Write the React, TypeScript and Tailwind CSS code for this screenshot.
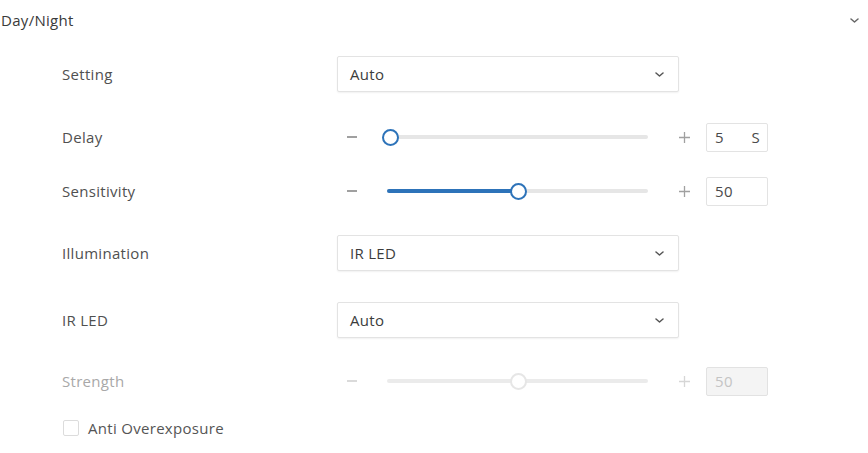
import React from 'react';

const Chevron = ({ className = '' }: { className?: string }) => (
  <svg width="9" height="5" viewBox="0 0 9 5" className={className}>
    <path d="M1 1l3.5 3 3.5-3" fill="none" stroke="currentColor" strokeWidth="1.5" strokeLinecap="round" strokeLinejoin="round" />
  </svg>
);

const Select = ({ value }: { value: string }) => (
  <div className="flex items-center justify-between w-[342px] h-[36px] pl-[12px] pr-[14px] border border-[#e3e3e3] rounded-[2px] shadow-[0_1px_2px_rgba(0,0,0,0.06)] bg-white text-[#3c3c3c]">
    <span>{value}</span>
    <Chevron className="text-[#555]" />
  </div>
);

type SliderProps = { pct: number; value: string; unit?: string; disabled?: boolean };

const Slider = ({ pct, value, unit, disabled }: SliderProps) => {
  return (
    <div className="flex items-center">
      <div className="w-[30px] flex justify-center">
        <div className={`w-[10px] h-[1.5px] ${disabled ? 'bg-[#dadada]' : 'bg-[#a0a0a0]'}`} />
      </div>
      <div className="relative ml-[20px] w-[261px] h-[16px] flex items-center">
        <div className={`w-full h-[4px] rounded-full ${disabled ? 'bg-[#ebebeb]' : 'bg-[#e6e6e6]'}`} />
        {!disabled && (
          <div className="absolute left-0 h-[4px] rounded-full bg-[#2d73b9]" style={{ width: `${pct}%` }} />
        )}
        <div
          className={`absolute w-[17px] h-[17px] -ml-[8px] rounded-full bg-white border-2 ${disabled ? 'border-[#e6e6e6]' : 'border-[#2d73b9]'}`}
          style={{ left: `${pct}%` }}
        />
      </div>
      <div className="w-[20px] ml-[26px] flex justify-center">
        <svg width="11" height="11" viewBox="0 0 11 11">
          <path d="M5.5 0v11M0 5.5h11" stroke={disabled ? '#d6d6d6' : '#a0a0a0'} strokeWidth="1.3" />
        </svg>
      </div>
      <div
        className={`ml-[12px] w-[62px] h-[29px] flex items-center justify-between pl-[8px] pr-[7px] border rounded-[2px] ${
          disabled ? 'bg-[#f4f4f4] border-[#e2e2e2] text-[#c4c4c4]' : 'bg-white border-[#e3e3e3] text-[#4a4a4a]'
        }`}
      >
        <span>{value}</span>
        {unit && <span>{unit}</span>}
      </div>
    </div>
  );
};

const Label = ({ children, muted }: { children: React.ReactNode; muted?: boolean }) => (
  <div className={`w-[337px] pl-[62px] ${muted ? 'text-[#a8a8a8]' : 'text-[#505050]'}`}>{children}</div>
);

export default function App() {
  return (
    <div className="w-[868px] h-[453px] bg-white text-[15px] tracking-[0.3px] font-['Open_Sans',sans-serif]">
      <div className="flex items-center justify-between h-[40px] pl-[1px] pr-[9px] text-[#3a3a3a]">
        <span>Day/Night</span>
        <Chevron className="text-[#666]" />
      </div>

      <div className="flex items-center h-[36px] mt-[16px]">
        <Label>Setting</Label>
        <Select value="Auto" />
      </div>

      <div className="flex items-center h-[30px] mt-[30px]">
        <Label>Delay</Label>
        <Slider pct={1} value="5" unit="S" />
      </div>

      <div className="flex items-center h-[30px] mt-[24px]">
        <Label>Sensitivity</Label>
        <Slider pct={50} value="50" />
      </div>

      <div className="flex items-center h-[36px] mt-[29px]">
        <Label>Illumination</Label>
        <Select value="IR LED" />
      </div>

      <div className="flex items-center h-[36px] mt-[31px]">
        <Label>IR LED</Label>
        <Select value="Auto" />
      </div>

      <div className="flex items-center h-[30px] mt-[28px]">
        <Label muted>Strength</Label>
        <Slider pct={50} value="50" disabled />
      </div>

      <div className="flex items-center h-[20px] mt-[22px] pl-[63px]">
        <div className="w-[16px] h-[16px] border border-[#dcdcdc] rounded-[2px] bg-white" />
        <span className="ml-[9px] text-[#555]">Anti Overexposure</span>
      </div>
    </div>
  );
}
